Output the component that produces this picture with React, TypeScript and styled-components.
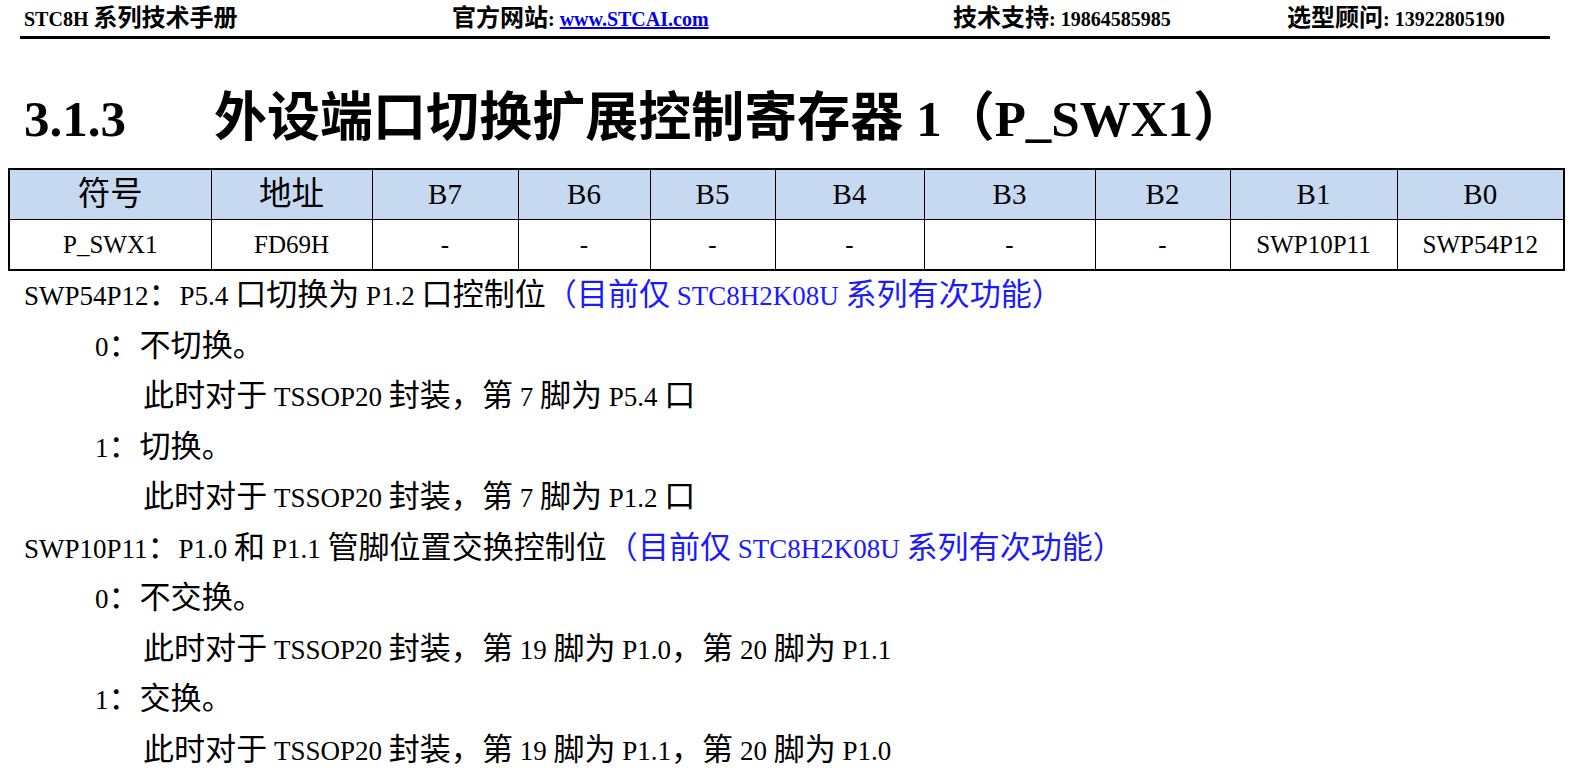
import styled, { createGlobalStyle } from "styled-components";

const Global = createGlobalStyle`
  body {
    margin: 0;
    background: #fff;
    font-family: "Liberation Serif", "Noto Sans CJK SC", serif;
    color: #000;
  }
`;

const cols = [202, 161, 146, 132, 125, 149, 171, 135, 167, 167];
const heads = ["符号", "地址", "B7", "B6", "B5", "B4", "B3", "B2", "B1", "B0"];
const vals = ["P_SWX1", "FD69H", "-", "-", "-", "-", "-", "-", "SWP10P11", "SWP54P12"];

// CJK glyphs in the source document are set larger than the Latin text
const Mixed = ({ text, scale }: { text: string; scale: number }) => {
  const parts = text.split(/([\u3000-\u303f\u4e00-\u9fff\uff00-\uffef]+)/);
  return (
    <>
      {parts.map((p, i) =>
        i % 2 === 1 ? (
          <Cjk key={i} scale={scale}>
            {p}
          </Cjk>
        ) : (
          p
        )
      )}
    </>
  );
};

const lines: { level: number; text: string; note?: string }[] = [
  { level: 0, text: "SWP54P12：P5.4 口切换为 P1.2 口控制位", note: "（目前仅 STC8H2K08U 系列有次功能）" },
  { level: 1, text: "0：不切换。" },
  { level: 2, text: "此时对于 TSSOP20 封装，第 7 脚为 P5.4 口" },
  { level: 1, text: "1：切换。" },
  { level: 2, text: "此时对于 TSSOP20 封装，第 7 脚为 P1.2 口" },
  { level: 0, text: "SWP10P11：P1.0 和 P1.1 管脚位置交换控制位", note: "（目前仅 STC8H2K08U 系列有次功能）" },
  { level: 1, text: "0：不交换。" },
  { level: 2, text: "此时对于 TSSOP20 封装，第 19 脚为 P1.0，第 20 脚为 P1.1" },
  { level: 1, text: "1：交换。" },
  { level: 2, text: "此时对于 TSSOP20 封装，第 19 脚为 P1.1，第 20 脚为 P1.0" },
];

const App = () => {
  return (
    <Page>
      <Global />
      <Header>
        <span>
          <Mixed text="STC8H 系列技术手册" scale={1.2} />
        </span>
        <span>
          <Mixed text="官方网站: " scale={1.2} />
          <a href="#">www.STCAI.com</a>
        </span>
        <span>
          <Mixed text="技术支持: 19864585985" scale={1.2} />
        </span>
        <span>
          <Mixed text="选型顾问: 13922805190" scale={1.2} />
        </span>
      </Header>
      <Title>
        <span>3.1.3</span>
        <span>
          <Mixed text="外设端口切换扩展控制寄存器 1（P_SWX1）" scale={1.04} />
        </span>
      </Title>
      <Table>
        <colgroup>
          {cols.map((w, i) => (
            <col key={i} style={{ width: w }} />
          ))}
        </colgroup>
        <tbody>
          <tr>
            {heads.map((h) => (
              <Th key={h}>
                <Mixed text={h} scale={1.12} />
              </Th>
            ))}
          </tr>
          <tr>
            {vals.map((v, i) => (
              <Td key={i}>{v}</Td>
            ))}
          </tr>
        </tbody>
      </Table>
      {lines.map((l, i) => (
        <Line key={i} level={l.level}>
          <Mixed text={l.text} scale={1.15} />
          {l.note && (
            <Note>
              <Mixed text={l.note} scale={1.15} />
            </Note>
          )}
        </Line>
      ))}
    </Page>
  );
};

export default App;

const Page = styled.div`
  width: 1569px;
  height: 771px;
  overflow: hidden;
`;

const Cjk = styled.span<{ scale: number }>`
  font-size: ${(p) => p.scale}em;
  line-height: 1;
`;

const Header = styled.div`
  margin: 0 19px 0 20px;
  height: 36px;
  border-bottom: 3px solid #000;
  display: grid;
  grid-template-columns: 428px 501px 334px auto;
  align-items: center;
  padding-left: 4px;
  font-size: 20px;
  font-weight: 700;
  white-space: nowrap;

  a {
    color: #0000ee;
    text-decoration: underline;
  }
`;

const Title = styled.h1`
  margin: 47px 0 0 24px;
  height: 66px;
  display: flex;
  gap: 88px;
  align-items: center;
  font-size: 51px;
  font-weight: 700;
  white-space: nowrap;
`;

const Table = styled.table`
  margin: 16px 0 0 8px;
  border-collapse: collapse;
  table-layout: fixed;
  width: 1555px;
  border: 2px solid #000;
`;

const Th = styled.td`
  background: #c6d9f1;
  height: 49px;
  border: 1.5px solid #000;
  text-align: center;
  font-size: 29px;
  padding: 0;
`;

const Td = styled.td`
  height: 49px;
  border: 1.5px solid #000;
  text-align: center;
  font-size: 25px;
  padding: 0;
`;

const Line = styled.div<{ level: number }>`
  height: 50.5px;
  line-height: 50.5px;
  font-size: 27px;
  padding-left: ${(p) => [24, 95, 143][p.level]}px;
  white-space: nowrap;
`;

const Note = styled.span`
  color: #1a1aff;
`;
